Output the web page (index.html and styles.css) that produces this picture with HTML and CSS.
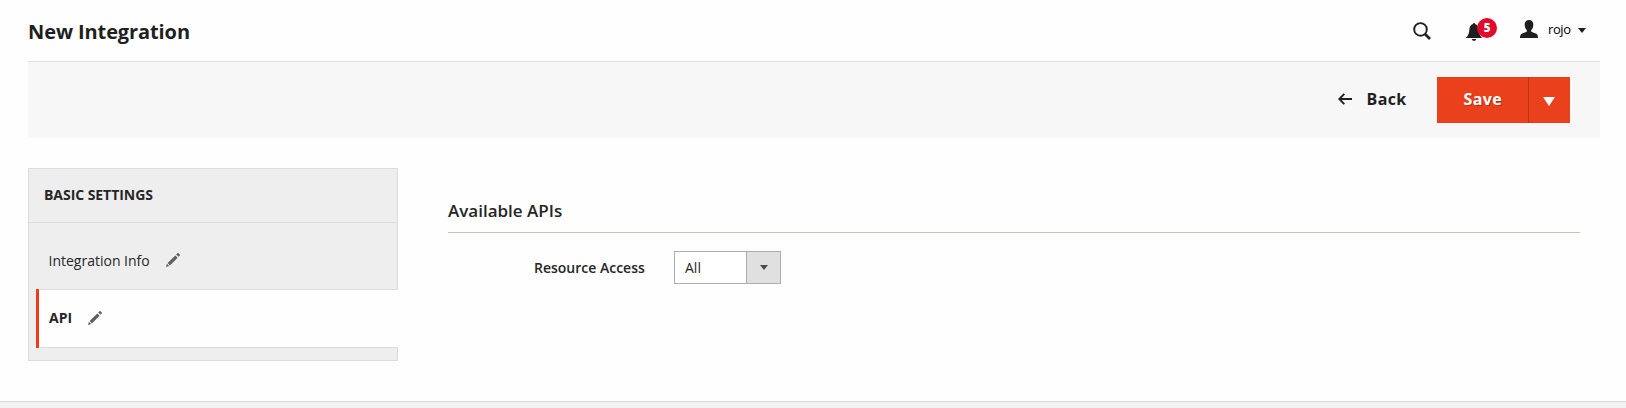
FILE: index.html
```html
<!DOCTYPE html>
<html lang="en">
<head>
<meta charset="utf-8">
<title>New Integration</title>
<link rel="stylesheet" href="styles.css">
</head>
<body>
<header class="header">
  <h1 class="title">New Integration</h1>
  <div class="tools">
    <svg class="search" width="18" height="18" viewBox="0 0 18 18"><circle cx="7.500" cy="7.400" r="6.300" fill="none" stroke="currentColor" stroke-width="1.900"/><path d="M12 12 17 17" stroke="currentColor" stroke-width="2.600"/></svg>
    <div class="notifications">
      <svg width="16" height="18" viewBox="0 0 16 18"><path fill="currentColor" d="M8 0c.7 0 1 .5 1 1.100 2.500.6 3.400 2.700 3.600 5.200.2 3.700.9 6.100 3.400 8.500v.2H0v-.2c2.500-2.400 3.200-4.800 3.400-8.500.2-2.500 1.100-4.600 3.600-5.200C7 .5 7.300 0 8 0zM5.800 16h4.400c-.4 1.300-1.200 2-2.200 2s-1.800-.7-2.200-2z"/></svg>
      <span class="badge">5</span>
    </div>
    <div class="account">
      <svg width="18" height="18" viewBox="0 0 18 18"><path fill="currentColor" d="M9 0c3 0 4.500 2 4.300 5-.1 2.200-.9 4-2.100 5.100-.2 1.200.2 1.700 1.300 2.100l3.300 1.300c1.500.6 2.200 2 2.200 4.500H0c0-2.500.7-3.900 2.200-4.500l3.300-1.300c1.100-.4 1.500-.9 1.300-2.100C5.600 9 4.800 7.200 4.700 5 4.500 2 6 0 9 0z"/></svg>
      <span class="user">rojo</span>
      <svg class="caret" width="8" height="5" viewBox="0 0 8 5"><path fill="currentColor" d="M0 0h8L4 5z"/></svg>
    </div>
  </div>
</header>
<div class="toolbar">
  <a class="back"><svg width="14" height="12" viewBox="0 0 14 12"><path d="M6.300.8 1.300 6l5 5.200M1.500 6H14" fill="none" stroke="currentColor" stroke-width="1.900"/></svg><span>Back</span></a>
  <div class="split">
    <span class="save">Save</span>
    <span class="toggle"><svg width="12" height="9" viewBox="0 0 12 9"><path fill="currentColor" d="M0 0h12L6 9z"/></svg></span>
  </div>
</div>
<div class="content">
  <nav class="sidebar">
    <div class="sidebar-title">BASIC SETTINGS</div>
    <div class="tab"><span class="tab-info">Integration Info</span><svg class="pencil" width="14" height="14" viewBox="0 0 14 14"><path fill="currentColor" d="M0 14l.9-3.200 2.300 2.300zM1.600 10.100l7.700-7.700 2.300 2.300-7.700 7.700zM10.200 1.500 11.400.3q.6-.6 1.200 0l1.100 1.100q.6.6 0 1.200L12.500 3.800z"/></svg></div>
    <div class="tab active"><div class="tab-body"><span class="tab-api">API</span><svg class="pencil" width="14" height="14" viewBox="0 0 14 14"><path fill="currentColor" d="M0 14l.9-3.200 2.300 2.300zM1.600 10.100l7.700-7.700 2.300 2.300-7.700 7.700zM10.200 1.500 11.400.3q.6-.6 1.200 0l1.100 1.100q.6.6 0 1.200L12.500 3.800z"/></svg></div></div>
    <div class="sidebar-end"></div>
  </nav>
  <main class="main">
    <h2 class="legend">Available APIs</h2>
    <div class="field">
      <span class="label">Resource Access</span>
      <div class="select"><span class="value">All</span><span class="arrow"><svg width="8" height="5" viewBox="0 0 8 5"><path fill="currentColor" d="M0 0h8L4 5z"/></svg></span></div>
    </div>
  </main>
</div>
<footer class="footer"></footer>
</body>
</html>
```
FILE: styles.css
```css
* { box-sizing: border-box; }
body { margin: 0; height: 408px; overflow: hidden; display: flex; flex-direction: column; background: #fefefe; color: #262626; font: 14px "Open Sans", sans-serif; }
svg { display: block; flex: none; }
h1, h2 { margin: 0; }
.header { height: 61px; flex: none; display: flex; justify-content: space-between; padding: 0 40px 0 28px; color: #1f1f1f; }
.title { font-size: 20px; line-height: 28px; font-weight: 700; letter-spacing: -.1px; padding-top: 18px; white-space: nowrap; }
.tools { display: flex; align-items: flex-start; }
.search { margin: 22px 35px 0 0; }
.notifications { position: relative; width: 54px; padding-top: 23px; }
.badge { position: absolute; left: 11px; top: 18px; width: 20px; height: 20px; border-radius: 50%; background: #e20a2c; color: #fff; font-size: 11.5px; font-weight: 800; line-height: 20px; text-align: center; }
.account { display: flex; padding-top: 20px; }
.user { width: 30px; margin-left: 10px; font-size: 13px; line-height: 18px; letter-spacing: -.4px; color: #000; }
.caret { margin-top: 8px; }
.toolbar { height: 77px; flex: none; margin: 0 26px 0 28px; padding: 15px 30px 0 0; border-top: 1px solid #e0e0e0; background: #f7f7f7; display: flex; justify-content: flex-end; color: #1f1f1f; font-size: 16px; font-weight: 700; letter-spacing: .4px; }
.back { display: flex; align-items: center; gap: 14.5px; height: 44px; width: 99px; line-height: 44px; }
.split { display: flex; width: 133px; height: 46px; background: #eb401c; color: #fff; line-height: 44px; }
.save { width: 91px; padding-left: 26.5px; text-shadow: 1px 1px 0 rgba(0,0,0,.25); }
.toggle { flex: 1; border-left: 1px solid #b8391a; display: flex; align-items: flex-start; padding: 20px 0 0 14px; }
.content { flex: none; height: 263px; display: flex; padding: 30px 46px 0 28px; }
.sidebar { width: 370px; height: 193px; display: flex; flex-direction: column; }
.sidebar-title { height: 55px; flex: none; border: 1px solid #dcdcdc; background: #eee; padding-left: 15px; line-height: 52px; font-weight: 700; font-size: 14px; letter-spacing: -.05px; }
.tab { height: 66px; flex: none; border: 1px solid #dcdcdc; border-width: 0 1px; background: #eee; display: flex; align-items: center; padding: 8px 0 0 19.5px; }
.tab-info { width: 117.5px; }
.tab.active { height: 59px; border-right: 0; padding: 0 0 0 7px; }
.tab-body { flex: 1; height: 59px; display: flex; align-items: center; border-left: 3px solid #f13c1a; padding: 0 0 2px 10px; background: linear-gradient(#dcdcdc 1px, #fefefe 1px, #fefefe 58px, #dcdcdc 58px); }
.tab-api { width: 39px; font-weight: 700; }
.pencil { color: #5f5f5f; }
.sidebar-end { flex: 1; border: 1px solid #dcdcdc; border-top: 0; background: #eee; }
.main { margin-left: 50px; flex: 1; padding-top: 29px; }
.legend { height: 36px; border-bottom: 1px solid #cac3b4; font-size: 17px; line-height: 27px; font-weight: 600; }
.field { display: flex; height: 33px; margin: 18px 0 0 86px; }
.label { width: 140px; font-weight: 600; line-height: 33px; }
.select { width: 107px; height: 33px; display: flex; border: 1px solid #adadad; background: #fff; line-height: 32px; }
.value { width: 71px; padding-left: 10px; }
.arrow { flex: 1; display: flex; align-items: center; justify-content: center; background: #e0e0e0; border-left: 1px solid #adadad; color: #514943; }
.footer { height: 7px; flex: none; border-top: 1px solid #dadada; background: #f2f2f2; }
```
